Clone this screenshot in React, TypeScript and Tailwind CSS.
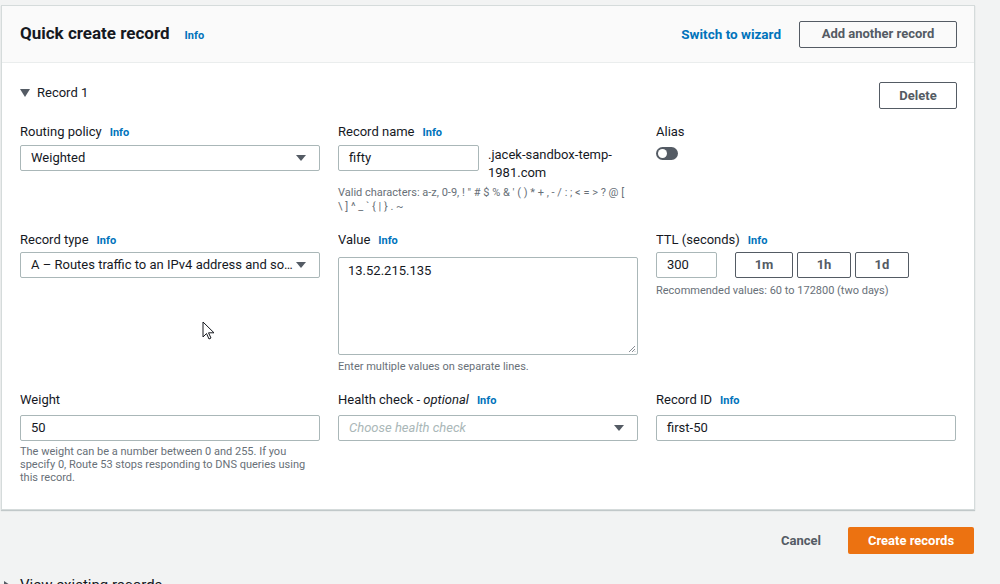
import React from 'react'

const font = { fontFamily: 'Roboto, "Noto Sans", Arial, sans-serif' }

function Info() {
  return <span className="ml-2 text-[11px] font-bold leading-[18px] text-[#0073bb]">Info</span>
}

function Caret() {
  return (
    <svg width="12" height="8" viewBox="0 0 12 8" className="shrink-0">
      <path d="M1 1h10L6 7z" fill="#545b64" />
    </svg>
  )
}

function Label({ children, info = true }: { children: React.ReactNode; info?: boolean }) {
  return (
    <div className="flex h-[18px] items-baseline overflow-hidden text-[13px] leading-[18px] text-[#16191f]">
      {children}
      {info && <Info />}
    </div>
  )
}

function Select({ value, placeholder, className = '' }: { value?: string; placeholder?: string; className?: string }) {
  return (
    <div
      className={`flex h-[26px] items-center justify-between rounded-[2px] border border-[#aab7b8] pl-[10px] pr-[12px] ${className}`}
    >
      {value ? (
        <span className="truncate text-[13px] text-[#16191f]">{value}</span>
      ) : (
        <span className="truncate text-[13px] italic text-[#aab7b8]">{placeholder}</span>
      )}
      <Caret />
    </div>
  )
}

function Input({ value, className = '' }: { value: string; className?: string }) {
  return (
    <div
      className={`flex h-[26px] items-center rounded-[2px] border border-[#aab7b8] px-[10px] text-[13px] text-[#16191f] ${className}`}
    >
      {value}
    </div>
  )
}

function Hint({ children, className = '' }: { children: React.ReactNode; className?: string }) {
  return <p className={`text-[11px] text-[#687078] ${className}`}>{children}</p>
}

function TtlButton({ label, className = '' }: { label: string; className?: string }) {
  return (
    <div
      className={`flex h-[26px] items-center justify-center rounded-[2px] border border-[#545b64] text-[13px] font-bold text-[#545b64] ${className}`}
    >
      {label}
    </div>
  )
}

export default function App() {
  return (
    <div className="relative h-[584px] overflow-hidden bg-[#f2f3f3] pt-[5px]" style={font}>
      {/* Card */}
      <div className="ml-[1px] w-[974px] border border-[#d5dbdb] bg-white shadow-[0_1px_1px_rgba(0,28,36,0.2)]">
        {/* Header */}
        <div className="flex h-[57px] items-center justify-between border-b border-[#eaeded] bg-[#fafafa] pl-[18px] pr-[17px]">
          <div className="flex items-baseline">
            <h1 className="text-[17px] font-bold text-[#16191f]">Quick create record</h1>
            <span className="ml-[15px] text-[11px] font-bold text-[#0073bb]">Info</span>
          </div>
          <div className="flex items-center">
            <span className="text-[13.5px] font-bold text-[#0073bb]">Switch to wizard</span>
            <div className="ml-[18px] flex h-[27px] w-[158px] items-center justify-center rounded-[2px] border border-[#545b64] text-[13px] font-bold text-[#545b64]">
              Add another record
            </div>
          </div>
        </div>

        {/* Body */}
        <div className="pb-[25px] pl-[18px] pr-[17px] pt-[19px]">
          <div className="flex items-start justify-between">
            <div className="mt-[1px] flex items-center gap-[7px] text-[13px] text-[#16191f]">
              <svg width="10" height="8" viewBox="0 0 10 8">
                <path d="M0 0h10L5 8z" fill="#545b64" />
              </svg>
              Record 1
            </div>
            <div className="flex h-[27px] w-[78px] items-center justify-center rounded-[2px] border border-[#545b64] text-[13px] font-bold text-[#545b64]">
              Delete
            </div>
          </div>

          {/* Row 1 */}
          <div className="mt-[14px] grid grid-cols-[300px_300px_300px] gap-x-[18px]">
            <div>
              <Label>Routing policy</Label>
              <Select value="Weighted" className="mt-[4px]" />
            </div>
            <div>
              <Label>Record name</Label>
              <div className="mt-[4px] flex items-start">
                <Input value="fifty" className="w-[141px]" />
                <span className="ml-[9px] mt-[1px] w-[140px] text-[13px] leading-[18px] text-[#16191f]">
                  .jacek-sandbox-temp-1981.com
                </span>
              </div>
              <Hint className="mt-[4px] leading-[14px]">
                Valid characters: a-z, 0-9, ! " # $ % &amp; ' ( ) * + , - / : ; &lt; = &gt; ? @ [<br />\ ] ^ _ ` {'{'} |{' '}
                {'}'} . ~
              </Hint>
            </div>
            <div>
              <Label info={false}>Alias</Label>
              <div className="mt-[6px] flex h-[13px] w-[22px] items-center rounded-full bg-[#545b64] px-[2px]">
                <div className="h-[9px] w-[9px] rounded-full bg-white" />
              </div>
            </div>
          </div>

          {/* Row 2 */}
          <div className="mt-[17px] grid grid-cols-[300px_300px_300px] gap-x-[18px]">
            <div>
              <Label>Record type</Label>
              <Select value="A – Routes traffic to an IPv4 address and so…" className="mt-[3px]" />
            </div>
            <div>
              <Label>Value</Label>
              <div className="relative mt-[8px] h-[98px] rounded-[2px] border border-[#aab7b8] px-[9px] pt-[3px] text-[13px] text-[#16191f]">
                13.52.215.135
                <svg width="8" height="8" viewBox="0 0 8 8" className="absolute bottom-[1px] right-[1px]">
                  <path d="M7 1L1 7M7 4L4 7M7 6.5L6.5 7" stroke="#687078" strokeWidth="0.8" />
                </svg>
              </div>
              <Hint className="mt-[5px] leading-[14px]">Enter multiple values on separate lines.</Hint>
            </div>
            <div>
              <Label>TTL (seconds)</Label>
              <div className="mt-[3px] flex items-center">
                <Input value="300" className="w-[61px]" />
                <div className="ml-[18px] flex gap-[4px]">
                  <TtlButton label="1m" className="w-[58px]" />
                  <TtlButton label="1h" className="w-[54px]" />
                  <TtlButton label="1d" className="w-[54px]" />
                </div>
              </div>
              <Hint className="mt-[6px] leading-[14px]">Recommended values: 60 to 172800 (two days)</Hint>
            </div>
          </div>

          {/* Row 3 */}
          <div className="mt-[17px] grid grid-cols-[300px_300px_300px] gap-x-[18px]">
            <div>
              <Label info={false}>Weight</Label>
              <Input value="50" className="mt-[6px]" />
              <Hint className="mt-[4px] leading-[13px]">
                The weight can be a number between 0 and 255. If you specify 0, Route 53 stops responding to DNS queries
                using this record.
              </Hint>
            </div>
            <div>
              <Label>
                Health check -&nbsp;<i>optional</i>
              </Label>
              <Select placeholder="Choose health check" className="mt-[6px]" />
            </div>
            <div>
              <Label>Record ID</Label>
              <Input value="first-50" className="mt-[6px]" />
            </div>
          </div>
        </div>
      </div>

      {/* Footer actions */}
      <div className="mt-[17px] flex w-[974px] items-center justify-end">
        <span className="text-[13px] font-bold text-[#545b64]">Cancel</span>
        <div className="ml-[27px] flex h-[27px] w-[126px] items-center justify-center rounded-[2px] bg-[#ec7211] text-[13px] font-bold text-white">
          Create records
        </div>
      </div>

      <div className="mt-[21px] flex items-center gap-[10px] pl-[4px] text-[15px] leading-[20px] text-[#16191f]">
        <svg width="6" height="8" viewBox="0 0 6 8">
          <path d="M0 0l6 4-6 4z" fill="#545b64" />
        </svg>
        View existing records
      </div>

      {/* mouse pointer captured in the screenshot */}
      <svg width="14" height="20" viewBox="0 0 14 20" className="absolute left-[202px] top-[321px]">
        <path d="M1 1v15l3.5-3.5 2.5 5.5 2-1-2.5-5.2H12z" fill="white" stroke="#16191f" strokeWidth="1" />
      </svg>
    </div>
  )
}
